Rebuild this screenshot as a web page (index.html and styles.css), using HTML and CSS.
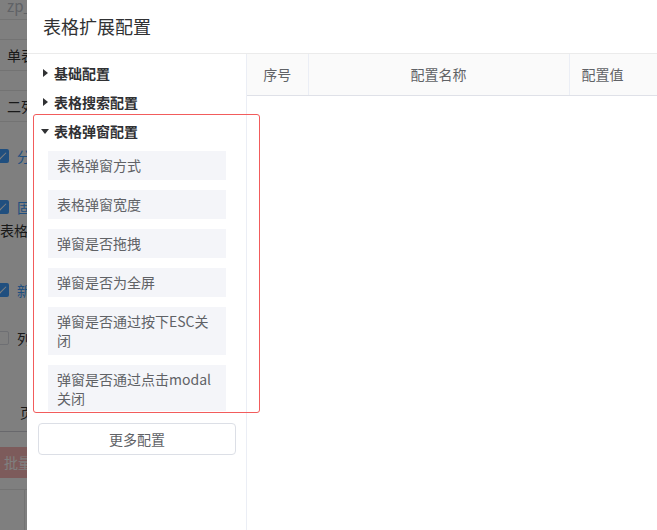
FILE: index.html
```html
<!DOCTYPE html>
<html lang="zh-CN">
  <head>
    <meta charset="UTF-8" />
    <meta name="viewport" content="width=device-width, initial-scale=1.0" />
    <title>表格扩展配置</title>
    <link rel="stylesheet" href="styles.css">
  </head>
  <body>
    <div class="page">
      <!-- page behind the drawer, dimmed by the mask -->
      <div class="backdrop">
        <div class="bg-inner">
          <div class="bg-row top">zp_table</div>
          <div class="bg-row thin"></div>
          <div class="bg-row">单表格</div>
          <div class="bg-row thin"></div>
          <div class="bg-row">二列表</div>
          <div class="bg-check on first"><span class="box"></span>分页</div>
          <div class="bg-check on"><span class="box"></span>固定</div>
          <div class="bg-label">表格边框</div>
          <div class="bg-check on gap"><span class="box"></span>新增</div>
          <div class="bg-check"><span class="box"></span>列宽</div>
          <div class="bg-page">页码</div>
          <div class="bg-btn">批量删除</div>
          <div class="bg-cells"><span></span></div>
        </div>
      </div>

      <aside class="drawer">
        <header class="drawer-header">表格扩展配置</header>

        <div class="drawer-body">
          <nav class="side">
            <div class="tree">
              <div class="tree-node"><span class="caret"></span>基础配置</div>
              <div class="tree-node"><span class="caret"></span>表格搜索配置</div>
              <div class="tree-node open"><span class="caret"></span>表格弹窗配置</div>
              <ul class="leaf-list">
                <li>表格弹窗方式</li>
                <li>表格弹窗宽度</li>
                <li>弹窗是否拖拽</li>
                <li>弹窗是否为全屏</li>
                <li>弹窗是否通过按下ESC关闭</li>
                <li>弹窗是否通过点击modal关闭</li>
                <li>弹窗是否显示关闭按钮</li>
              </ul>
            </div>

            <button type="button" class="more-btn">更多配置</button>

            <div class="mark"></div>
          </nav>

          <section class="grid-area">
            <table class="grid">
              <thead>
                <tr>
                  <th class="col-index">序号</th>
                  <th class="col-name">配置名称</th>
                  <th class="col-value">配置值</th>
                </tr>
              </thead>
              <tbody></tbody>
            </table>
          </section>
        </div>
      </aside>
    </div>
  </body>
</html>
```

FILE: styles.css
```css
* {
  margin: 0;
  padding: 0;
  box-sizing: border-box;
}

body {
  font-family: "Noto Sans CJK SC", "Noto Sans", sans-serif;
  font-size: 14px;
  color: #606266;
  background-color: #fff;
  overflow: hidden;
}

.page {
  display: flex;
  width: 657px;
  height: 530px;
}

/* ---------- dimmed page behind ---------- */

.backdrop {
  position: relative;
  width: 27px;
  flex-shrink: 0;
  overflow: hidden;
  background-color: #fff;
}

.backdrop::after {
  content: "";
  position: absolute;
  inset: 0;
  background-color: rgba(0, 0, 0, 0.5);
}

.bg-inner {
  width: 200px;
  color: #333;
}

.bg-row {
  height: 31px;
  line-height: 31px;
  padding-left: 7px;
  border-bottom: 1px solid #e6e6e6;
  white-space: nowrap;
}

.bg-row.top {
  height: 20px;
  line-height: 12px;
  color: #c0c4cc;
  font-size: 15px;
}

.bg-row.thin {
  height: 20px;
}

.bg-check {
  display: flex;
  align-items: center;
  gap: 8px;
  height: 20px;
  margin-top: 31px;
  color: #409eff;
  white-space: nowrap;
}

.bg-check.first {
  margin-top: 24px;
}

.bg-check.gap {
  margin-top: 40px;
}

.bg-check .box {
  position: relative;
  width: 14px;
  height: 14px;
  margin-left: -5px;
  border-radius: 2px;
  background-color: #409eff;
}

.bg-check.on .box::after {
  content: "";
  position: absolute;
  left: 4px;
  top: 1px;
  width: 4px;
  height: 8px;
  border: solid #fff;
  border-width: 0 1px 1px 0;
  transform: rotate(45deg);
}

.bg-check:not(.on) {
  color: #333;
  margin-top: 28px;
}

.bg-check:not(.on) .box {
  background-color: #fff;
  border: 1px solid #dcdfe6;
}

.bg-label {
  height: 20px;
  line-height: 20px;
  margin-top: 3px;
  white-space: nowrap;
}

.bg-page {
  height: 30px;
  line-height: 20px;
  margin-top: 54px;
  padding-left: 20px;
  border-bottom: 1px solid #d0d0d8;
  white-space: nowrap;
}

.bg-btn {
  height: 31px;
  line-height: 31px;
  margin-top: 15px;
  padding-left: 4px;
  background-color: #fab6b6;
  color: #fff;
  white-space: nowrap;
}

.bg-cells {
  height: 60px;
  margin-top: 11px;
  border-top: 1px solid #e6e6e6;
}

.bg-cells span {
  display: block;
  width: 25px;
  height: 100%;
  border-right: 1px solid #e6e6e6;
}

/* ---------- drawer ---------- */

.drawer {
  flex: 1;
  display: flex;
  flex-direction: column;
  background-color: #fff;
}

.drawer-header {
  height: 54px;
  padding: 0 16px;
  line-height: 52px;
  font-size: 18px;
  color: #303133;
  border-bottom: 1px solid #ebebeb;
}

.drawer-body {
  flex: 1;
  display: flex;
}

.side {
  position: relative;
  width: 220px;
  flex-shrink: 0;
  border-right: 1px solid #ebeef5;
}

.tree {
  height: 357px;
  padding-top: 4px;
  overflow: hidden;
}

.tree-node {
  display: flex;
  align-items: center;
  height: 29px;
  padding-left: 13px;
  font-weight: bold;
  color: #303133;
}

.caret {
  width: 10px;
  height: 10px;
  margin-right: 4px;
  position: relative;
}

.caret::before {
  content: "";
  position: absolute;
  left: 3px;
  top: 1px;
  border-style: solid;
  border-width: 4px 0 4px 5px;
  border-color: transparent transparent transparent #303133;
}

.tree-node.open .caret::before {
  left: 1px;
  top: 3px;
  border-width: 5px 4px 0 4px;
  border-color: #303133 transparent transparent transparent;
}

.leaf-list {
  list-style: none;
  display: flex;
  flex-direction: column;
  gap: 10px;
  padding: 6px 0 0 21px;
}

.leaf-list li {
  width: 178px;
  padding: 5px 9px;
  line-height: 19px;
  background-color: #f4f5f9;
  color: #606266;
}

.more-btn {
  display: block;
  width: 198px;
  height: 32px;
  margin: 12px 0 0 11px;
  border: 1px solid #dcdfe6;
  border-radius: 4px;
  background-color: #fff;
  font-family: inherit;
  font-size: 14px;
  color: #606266;
}

/* red annotation frame over the open group */
.mark {
  position: absolute;
  left: 6px;
  top: 60px;
  width: 227px;
  height: 299px;
  border: 1px solid #f25c5c;
  border-radius: 3px;
  pointer-events: none;
}

/* ---------- table ---------- */

.grid-area {
  flex: 1;
  overflow: hidden;
}

.grid {
  border-collapse: collapse;
  table-layout: fixed;
  width: 460px;
}

.grid th {
  height: 41px;
  background-color: #fafafa;
  border-bottom: 1px solid #dfe1e8;
  border-right: 1px solid #ebeef5;
  font-weight: normal;
  color: #606266;
  text-align: center;
}

.col-index {
  width: 61px;
}

.col-name {
  width: 261px;
}

.col-value {
  text-align: left !important;
  padding-left: 12px;
}
```
